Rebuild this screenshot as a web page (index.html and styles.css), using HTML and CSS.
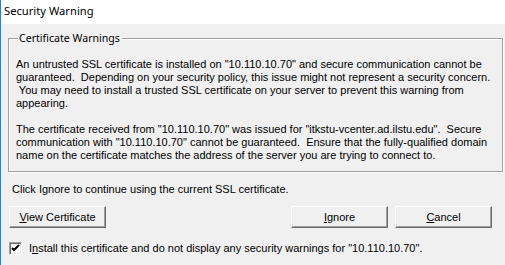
FILE: index.html
```html
<!DOCTYPE html>
<html lang="en">
<head>
    <meta charset="UTF-8">
    <title>Security Warning</title>
    <link rel="stylesheet" href="styles.css">
</head>
<body>

<div class="window">
    <div class="titlebar">Security Warning</div>
    <div class="client">
        <div class="group">
            <span class="group-title">Certificate Warnings</span>
            <p class="msg">An untrusted SSL certificate is installed on "10.110.10.70" and secure communication cannot be
guaranteed.  Depending on your security policy, this issue might not represent a security concern.
 You may need to install a trusted SSL certificate on your server to prevent this warning from
appearing.

The certificate received from "10.110.10.70" was issued for "itkstu-vcenter.ad.ilstu.edu".  Secure
communication with "10.110.10.70" cannot be guaranteed.  Ensure that the fully-qualified domain
name on the certificate matches the address of the server you are trying to connect to.</p>
        </div>
        <p class="hint">Click Ignore to continue using the current SSL certificate.</p>
        <div class="buttons">
            <button class="btn"><u>V</u>iew Certificate</button>
            <div class="spacer"></div>
            <button class="btn"><u>I</u>gnore</button>
            <button class="btn"><u>C</u>ancel</button>
        </div>
        <label class="check">
            <span class="box">
                <svg width="9" height="9" viewBox="0 0 9 9"><path d="M1 4 L3 6 L8 1" fill="none" stroke="#000" stroke-width="2"/></svg>
            </span>
            <span>I<u>n</u>stall this certificate and do not display any security warnings for "10.110.10.70".</span>
        </label>
    </div>
</div>

</body>
</html>
```
FILE: styles.css
```css
body {
    margin: 0;
    font-family: "Liberation Sans", Arial, sans-serif;
    font-size: 11px;
    color: #000;
}
.window {
    width: 504px;
    height: 265px;
    border-left: 1px solid #1883d7;
    background: #f0f0f0;
    overflow: hidden;
}
.titlebar {
    height: 24px;
    background: #fff;
    padding-left: 3px;
    font-family: "Noto Sans", sans-serif;
    font-size: 11.2px;
    line-height: 22px;
}
.client {
    padding: 14px 0 0 7px;
}
.group {
    position: relative;
    width: 486px;
    border: 1px solid #a0a0a0;
    box-shadow: 1px 1px 0 #fff, inset 1px 1px 0 #fff;
    padding: 19px 0 9px 7px;
    box-sizing: content-box;
}
.group-title {
    position: absolute;
    top: -9px;
    left: 9px;
    padding: 0 2px 0 1px;
    background: #f0f0f0;
    font-family: "Noto Sans", sans-serif;
    font-size: 10.6px;
    line-height: 16px;
}
.msg {
    margin: 0;
    white-space: pre;
    line-height: 13px;
}
.hint {
    margin: 11px 0 0 4px;
    line-height: 13px;
}
.buttons {
    display: flex;
    gap: 7px;
    margin-top: 10px;
    margin-left: 1px;
}
.spacer {
    flex: 1;
}
.btn {
    width: 97px;
    height: 22px;
    margin: 0;
    padding: 0;
    font: inherit;
    background: #f0f0f0;
    border: 1px solid;
    border-color: #fff #696969 #696969 #fff;
    box-shadow: inset -1px -1px 0 #a0a0a0;
}
.buttons .btn:last-child {
    margin-right: 13px;
}
.check {
    display: flex;
    align-items: center;
    gap: 7px;
    margin: 14px 0 0 1px;
    line-height: 13px;
}
.box {
    width: 13px;
    height: 13px;
    box-sizing: border-box;
    background: #fff;
    border: 1px solid;
    border-color: #a0a0a0 #fff #fff #a0a0a0;
    box-shadow: inset 1px 1px 0 #696969, inset -1px -1px 0 #e3e3e3;
    display: flex;
    align-items: center;
    justify-content: center;
}
.box svg {
    display: block;
}
```
